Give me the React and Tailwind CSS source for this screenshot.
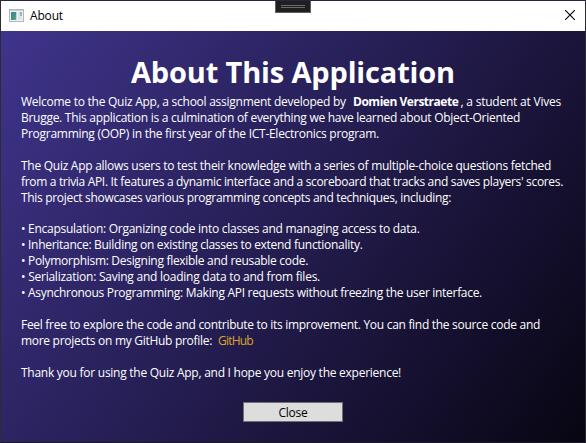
function Line({ children, className }) {
  return <div className={`h-4 whitespace-pre ${className}`}>{children}</div>;
}

function AppIcon() {
  return (
    <svg width="16" height="14" viewBox="0 0 16 14" shapeRendering="crispEdges">
      <defs>
        <linearGradient id="pane" x1="0" y1="0" x2="1" y2="1">
          <stop offset="0" stopColor="#4a78ae" />
          <stop offset="0.55" stopColor="#3f9488" />
          <stop offset="1" stopColor="#62ad78" />
        </linearGradient>
        <linearGradient id="side" x1="0" y1="0" x2="0" y2="1">
          <stop offset="0" stopColor="#8fa9cf" />
          <stop offset="1" stopColor="#8cc79c" />
        </linearGradient>
      </defs>
      <rect x="1" y="0" width="15" height="13" fill="#b3b7ba" />
      <rect x="2" y="1" width="13" height="11" fill="#f1f2f3" />
      <rect x="2" y="1" width="13" height="1" fill="#c9cdd0" />
      <rect x="3" y="3" width="5" height="8" fill="url(#pane)" />
      <rect x="8" y="3" width="1" height="8" fill="#c7d5da" />
      <rect x="10" y="3" width="2" height="8" fill="#dfe3e6" />
      <rect x="12" y="3" width="2" height="4" fill="url(#side)" />
      <rect x="12" y="7" width="2" height="4" fill="#e3e6e8" />
    </svg>
  );
}

function CloseIcon() {
  return (
    <svg className="mb-[3px]" width="10" height="10" viewBox="0 0 10 10" stroke="#000" strokeWidth="1.1">
      <path d="M0 0 10 10M10 0 0 10" />
    </svg>
  );
}

export default function App() {
  return (
    <div className="relative flex h-[443px] w-[586px] flex-col overflow-hidden border border-t-[#2a2540] border-r-[#2b2b30] border-b-[#1b1928] border-l-[#2d2d30] bg-white font-['Open_Sans','Noto_Sans',sans-serif] text-[12px] leading-4">
      <header className="flex h-[30px] shrink-0 items-center bg-white pr-[10px] pl-[7px] text-black">
        <AppIcon />
        <span className="ml-[6px] flex-1 tracking-[-0.16px]">About</span>
        <CloseIcon />
      </header>

      <div className="absolute top-[-1px] left-[274px] flex h-[13px] w-9 flex-col items-center gap-px border border-[#606060] bg-[#1f1f1f] pt-1">
        <div className="h-px w-6 bg-[#6b6b6b]" />
        <div className="h-px w-6 bg-[#6b6b6b]" />
      </div>

      <main className="flex flex-1 flex-col bg-[linear-gradient(125.1deg,#3f348c,#080512)] px-5 pt-[22px] text-white">
        <h1 className="h-[38px] text-center text-[29px] leading-[38px] font-bold tracking-[-0.157px] whitespace-nowrap">
          About This Application
        </h1>

        <section className="mt-[3px]">
          <div className="flex h-4 whitespace-pre">
            <span className="w-[332px] tracking-[-0.26px]">Welcome to the Quiz App, a school assignment developed by</span>
            <b className="w-[107.5px] tracking-[-0.48px]">Domien Verstraete</b>
            <span className="tracking-[-0.22px]">, a student at Vives</span>
          </div>
          <Line className="tracking-[-0.28px]">Brugge. This application is a culmination of everything we have learned about Object-Oriented</Line>
          <Line className="tracking-[-0.267px]">Programming (OOP) in the first year of the ICT-Electronics program.</Line>
        </section>

        <section className="mt-4">
          <Line className="tracking-[-0.272px]">The Quiz App allows users to test their knowledge with a series of multiple-choice questions fetched</Line>
          <Line className="tracking-[-0.322px]">from a trivia API. It features a dynamic interface and a scoreboard that tracks and saves players' scores.</Line>
          <Line className="tracking-[-0.319px]">This project showcases various programming concepts and techniques, including:</Line>
        </section>

        <section className="mt-[15px]">
          <Line className="tracking-[-0.269px]">• Encapsulation: Organizing code into classes and managing access to data.</Line>
          <Line className="tracking-[-0.29px]">• Inheritance: Building on existing classes to extend functionality.</Line>
          <Line className="tracking-[-0.3px]">• Polymorphism: Designing flexible and reusable code.</Line>
          <Line className="tracking-[-0.243px]">• Serialization: Saving and loading data to and from files.</Line>
          <Line className="tracking-[-0.299px]">• Asynchronous Programming: Making API requests without freezing the user interface.</Line>
        </section>

        <section className="mt-4">
          <Line className="tracking-[-0.296px]">Feel free to explore the code and contribute to its improvement. You can find the source code and</Line>
          <div className="flex h-4 whitespace-pre">
            <span className="w-[197px] tracking-[-0.293px]">more projects on my GitHub profile:</span>
            <a className="tracking-[-0.8px] text-[#daa52f]">GitHub</a>
          </div>
        </section>

        <Line className="mt-4 tracking-[-0.259px]">Thank you for using the Quiz App, and I hope you enjoy the experience!</Line>

        <button className="mt-[21px] h-5 w-[100px] self-center border border-[#707070] bg-[#dddddd] pt-px text-center leading-[18px] tracking-[-0.3px] text-black">
          Close
        </button>
      </main>
    </div>
  );
}
